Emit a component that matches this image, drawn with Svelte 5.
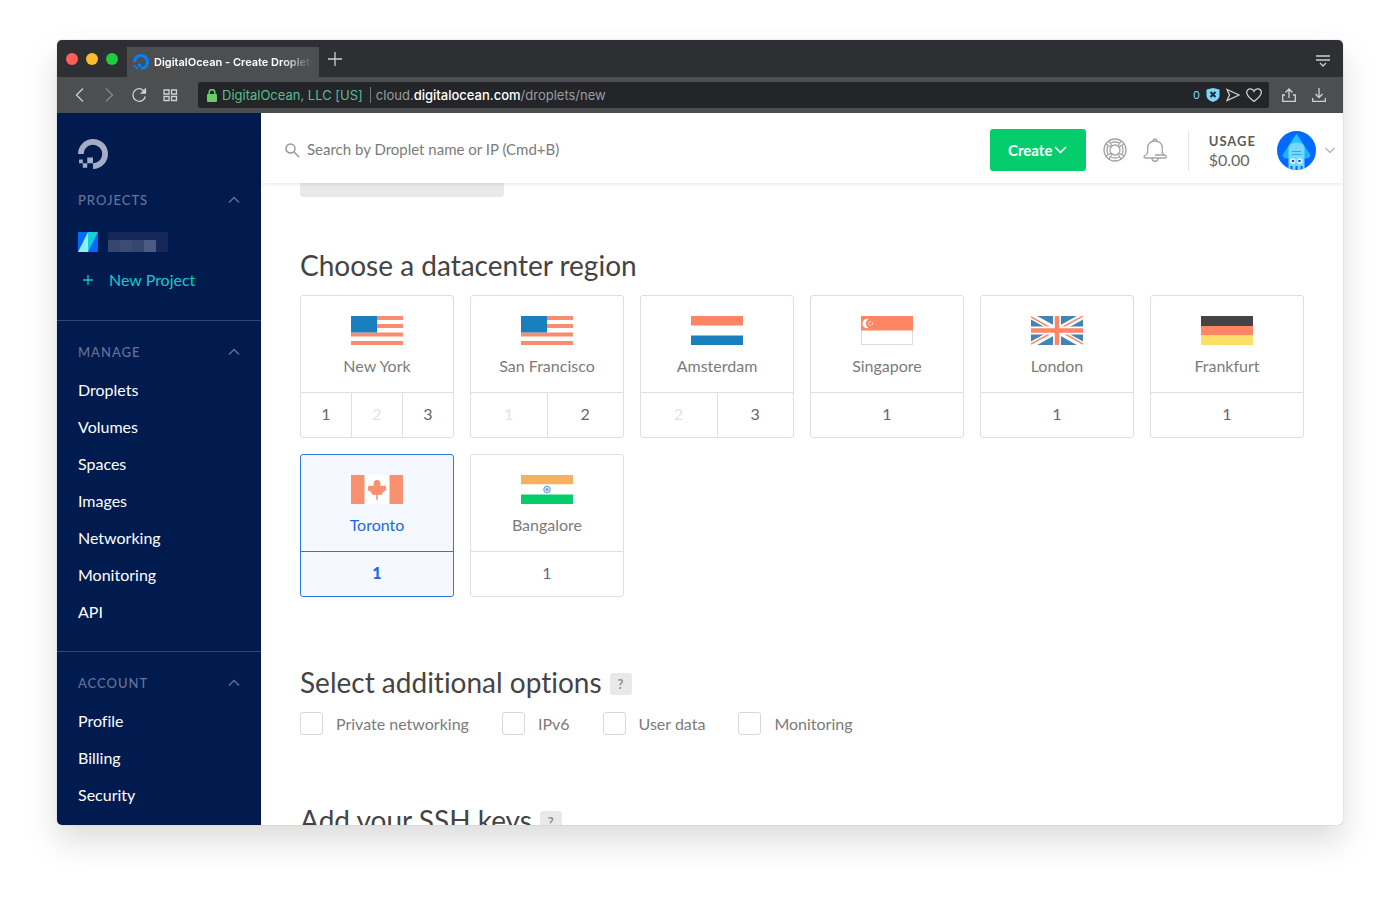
<script>
  const manageLinks = [
    "Droplets",
    "Volumes",
    "Spaces",
    "Images",
    "Networking",
    "Monitoring",
    "API",
  ];

  const accountLinks = ["Profile", "Billing", "Security"];

  const regions = [
    { name: "New York", flag: "us", slots: [1, 2, 3], full: [2] },
    { name: "San Francisco", flag: "us", slots: [1, 2], full: [1] },
    { name: "Amsterdam", flag: "nl", slots: [2, 3], full: [2] },
    { name: "Singapore", flag: "sg", slots: [1], full: [] },
    { name: "London", flag: "gb", slots: [1], full: [] },
    { name: "Frankfurt", flag: "de", slots: [1], full: [] },
    { name: "Toronto", flag: "ca", slots: [1], full: [] },
    { name: "Bangalore", flag: "in", slots: [1], full: [] },
  ];

  let options = $state([
    { id: "private-networking", label: "Private networking", checked: false },
    { id: "ipv6", label: "IPv6", checked: false },
    { id: "user-data", label: "User data", checked: false },
    { id: "monitoring", label: "Monitoring", checked: false },
  ]);

  let selected = $state({ name: "Toronto", slot: 1 });
  let search = $state("");

  function selectRegion(name, slot) {
    selected = { name, slot };
  }
</script>

{#snippet logo()}
  <svg class="logo" viewBox="0 0 24 24" aria-hidden="true">
    <path
      fill="currentColor"
      d="M12.04 0C5.408-.02.005 5.37.005 11.992h4.638c0-4.923 4.882-8.731 10.064-6.855a6.95 6.95 0 014.147 4.148c1.889 5.177-1.924 10.055-6.84 10.064v-4.61H7.391v4.623h4.61V24c7.86 0 13.967-7.588 11.397-15.83-1.115-3.59-3.985-6.446-7.575-7.575A12.8 12.8 0 0012.039 0zM7.39 19.362H3.828v3.564H7.39zm-3.563 0v-2.978H.85v2.978z"
    />
  </svg>
{/snippet}

{#snippet chevronUp()}
  <svg class="line" width="12" height="8" viewBox="0 0 12 8" aria-hidden="true">
    <path d="M1 6.5 6 1.5l5 5" />
  </svg>
{/snippet}

{#snippet flag(code)}
  <svg class="flag" width="52" height="29" viewBox="0 0 52 29" aria-hidden="true">
    {#if code === "us"}
      <path fill="#f98b6f" d="M0 0h52v4H0zM0 8h52v4H0zM0 16.500h52v4H0zM0 25h52v4H0z" />
      <path fill="#1a80bd" d="M0 0h26v16.500H0z" />
    {:else if code === "nl"}
      <path fill="#ff8664" d="M0 0h52v9.500H0z" />
      <path fill="#1a80bd" d="M0 19.500h52V29H0z" />
    {:else if code === "sg"}
      <rect x=".5" y=".5" width="51" height="28" fill="#fff" stroke="#dcdcdc" />
      <path fill="#ff8664" d="M0 0h52v14.500H0z" />
      <path fill="#fff" d="M7.500 3a4.700 4.700 0 1 0 0 9 5.200 5.200 0 0 1 0-9z" />
      <circle cx="9.500" cy="7.500" r="2" fill="none" stroke="#fff" stroke-dasharray="1.500 1" />
    {:else if code === "gb"}
      <path fill="#4384b5" d="M0 0h52v29H0z" />
      <path stroke="#fff" stroke-width="6" d="M0 0l52 29M52 0 0 29" />
      <path stroke="#ff8664" stroke-width="1.500" d="M0 1l23 13M52 0 30 12M0 28l22-12M52 28 29 15" />
      <path stroke="#fff" stroke-width="8" d="M26 0v29M0 14.500h52" />
      <path stroke="#ff8664" stroke-width="4.500" d="M26 0v29M0 14.500h52" />
    {:else if code === "de"}
      <path fill="#444" d="M0 0h52v10H0z" />
      <path fill="#ff8664" d="M0 10h52v9.500H0z" />
      <path fill="#fbdf68" d="M0 19.500h52V29H0z" />
    {:else if code === "ca"}
      <path fill="#fff" d="M13 0h26v29H13z" />
      <path fill="#f7916f" d="M0 0h13.500v29H0zM38.500 0H52v29H38.500z" />
      <path
        fill="#f7916f"
        d="M26 5c2 0 3.500 1.500 3.500 3.500L29 10.500l3 .5 2.500-.5.500 2 .500 2.500-3.500 2-1.500 3-3.700-.200v5h-1.600v-5l-3.700.200-1.500-3-3.500-2 .500-2.500.500-2 2.500.500 3-.500-.500-2C22.500 6.500 24 5 26 5z"
      />
    {:else if code === "in"}
      <path fill="#f6b160" d="M0 0h52v9.500H0z" />
      <path fill="#fff" d="M0 9.500h52v10H0z" />
      <path fill="#05cd6c" d="M0 19.500h52V29H0z" />
      <circle cx="26" cy="14.500" r="3.300" fill="#d9e8f6" stroke="#5e95cf" />
      <circle cx="26" cy="14.500" r="1.300" fill="#5e95cf" />
    {/if}
  </svg>
{/snippet}

<div class="window">
  <div class="tab-bar">
    <div class="lights">
      <span class="light close"></span>
      <span class="light minimise"></span>
      <span class="light zoom"></span>
    </div>
    <div class="tab">
      {@render logo()}
      <span class="tab-title">DigitalOcean - Create Droplets</span>
    </div>
    <button type="button" class="new-tab" aria-label="New tab">
      <svg class="line" width="14" height="14" viewBox="0 0 14 14"><path d="M7 0v14M0 7h14" /></svg>
    </button>
    <button type="button" class="tab-menu" aria-label="Tab menu">
      <svg class="line" width="14" height="12" viewBox="0 0 14 12">
        <path d="M0 1h14M0 5h14M4 8l3 3 3-3" />
      </svg>
    </button>
  </div>

  <div class="toolbar">
    <div class="tools">
      <button type="button" aria-label="Back">
        <svg class="line" width="16" height="16" viewBox="0 0 16 16"><path d="M11 1.500 4.500 8l6.500 6.500" /></svg>
      </button>
      <button type="button" class="dim" aria-label="Forward">
        <svg class="line" width="16" height="16" viewBox="0 0 16 16"><path d="M4 1.500 10.500 8 4 14.500" /></svg>
      </button>
      <button type="button" aria-label="Reload">
        <svg class="line" width="16" height="16" viewBox="0 0 16 16">
          <path d="M13 5.500A6.300 6.300 0 1 0 13.300 9.500" />
          <path fill="currentColor" d="M13.500 2v4h-4z" />
        </svg>
      </button>
      <button type="button" aria-label="Speed dial">
        <svg class="line" width="16" height="16" viewBox="0 0 16 16">
          <path d="M2 3h5v4H2zM9.500 3h5v4h-5zM2 9.500h5v4H2zM9.500 9.500h5v4h-5z" />
        </svg>
      </button>
    </div>
    <div class="address">
      <svg width="10" height="13" viewBox="0 0 10 13" aria-hidden="true">
        <path fill="none" stroke="#6ccb6c" stroke-width="1.500" d="M2.200 6V3.500a2.800 2.800 0 0 1 5.600 0V6" />
        <rect y="5" width="10" height="8" rx="1" fill="#6ccb6c" />
      </svg>
      <span class="owner">DigitalOcean, LLC [US]</span>
      <span class="url">cloud.<b>digitalocean.com</b>/droplets/new</span>
      <div class="address-tools">
        <span class="blocked">0</span>
        <svg width="14" height="14" viewBox="0 0 14 14" aria-hidden="true">
          <path fill="#7fd6fa" d="M7 0l6.500 1.500v6C13.500 11 10 13 7 14 4 13 .5 11 .5 7.500v-6z" />
          <path stroke="#1d2a33" stroke-width="2" d="M4.500 4l5 5M9.500 4l-5 5" />
        </svg>
        <svg class="line" width="14" height="14" viewBox="0 0 14 14" aria-hidden="true">
          <path d="M1 1.500 13 7 1 12.500 3.500 7z" />
        </svg>
        <svg class="line" width="16" height="14" viewBox="0 0 16 14" aria-hidden="true">
          <path d="M8 13.500C4 10.500.7 8 .7 4.600.7 2.400 2.300.8 4.300.8 5.900.8 7.300 1.700 8 3.300 8.700 1.700 10.100.8 11.700.8c2 0 3.600 1.600 3.600 3.800C15.300 8 12 10.500 8 13.500z" />
        </svg>
      </div>
    </div>
    <button type="button" aria-label="Share">
      <svg class="line" width="14" height="14" viewBox="0 0 14 14">
        <path d="M7 10V1M3.500 4.500 7 1l3.500 3.500M3 7H.7v6.300h12.600V7H11" />
      </svg>
    </button>
    <button type="button" aria-label="Downloads">
      <svg class="line" width="14" height="14" viewBox="0 0 14 14">
        <path d="M7 0v9.500M3.500 6 7 9.500 10.500 6M.7 10v3.300h12.600V10" />
      </svg>
    </button>
  </div>

  <div class="app">
    <aside class="sidebar">
      <a class="home" href="/" aria-label="DigitalOcean">{@render logo()}</a>

      <section class="nav-section projects">
        <h2>Projects {@render chevronUp()}</h2>
        <a class="project" href="/projects" aria-label="Project">
          <svg width="20" height="20" viewBox="0 0 20 20">
            <rect width="20" height="20" rx="1" fill="#0069ff" />
            <path fill="#8df0f8" d="M10 0v20H0z" />
            <path fill="#13cfd8" d="M10 0h10L10 20z" />
          </svg>
          <svg width="60" height="20" viewBox="0 0 60 20">
            <path fill="#142756" d="M0 0h60v20H0z" />
            <path fill="#35466f" d="M0 8h48v12H0z" />
            <path fill="#3c4b75" d="M12 8h12v12H12z" />
            <path fill="#4a5a83" d="M36 8h12v12H36z" />
          </svg>
        </a>
        <a class="new-project" href="/projects/new">
          <svg class="line" width="10" height="10" viewBox="0 0 10 10"><path d="M5 0v10M0 5h10" /></svg>
          New Project
        </a>
      </section>

      <nav class="nav-section" aria-label="Manage">
        <h2>Manage {@render chevronUp()}</h2>
        <ul>
          {#each manageLinks as link}
            <li><a href="/{link.toLowerCase()}">{link}</a></li>
          {/each}
        </ul>
      </nav>

      <nav class="nav-section" aria-label="Account">
        <h2>Account {@render chevronUp()}</h2>
        <ul>
          {#each accountLinks as link}
            <li><a href="/account/{link.toLowerCase()}">{link}</a></li>
          {/each}
        </ul>
      </nav>
    </aside>

    <div class="page">
      <header class="top-bar">
        <label class="search">
          <svg width="15" height="15" viewBox="0 0 15 15" aria-hidden="true">
            <g fill="none" stroke="#999" stroke-width="1.500">
              <circle cx="5.500" cy="5.500" r="4.500" />
              <path d="M9 9l5 5" />
            </g>
          </svg>
          <input
            type="text"
            aria-label="Search"
            placeholder="Search by Droplet name or IP (Cmd+B)"
            bind:value={search}
          />
        </label>
        <button type="button" class="create">
          Create
          <svg width="13" height="8" viewBox="0 0 13 8" aria-hidden="true">
            <path fill="none" stroke="#fff" stroke-width="1.500" d="M1 1l5.500 5.500L12 1" />
          </svg>
        </button>
        <button type="button" class="icon-button" aria-label="Help">
          <svg class="line" width="24" height="24" viewBox="0 0 24 24">
            <circle cx="12" cy="12" r="11" />
            <circle cx="12" cy="12" r="5" />
            <path d="M3 6 8 9M6 3l3 5M21 6l-5 3M18 3l-3 5M3 18l5-3M6 21l3-5M21 18l-5-3M18 21l-3-5" />
            <path d="M7.500 5q4.500-2 9 0M7.500 19q4.500 2 9 0M5 7.500q-2 4.500 0 9M19 7.500q2 4.500 0 9" />
          </svg>
        </button>
        <button type="button" class="icon-button" aria-label="Notifications">
          <svg class="line" width="24" height="24" viewBox="0 0 24 24">
            <path d="M22 20H2.500c-1.200 0-1.800-1.200-1.200-2 .5-.7 3.400-.7 3.400-4V9.500C4.700 5.500 8 3 12 3s7.300 2.500 7.300 6.500V14c0 2 1 2.800 3 3.300 1.500.6 1.200 2.700-.3 2.700M10 3c-.3-2.800 4.300-2.800 4 0M9 20c0 4.300 6 4.300 6 0M12 17h10" />
          </svg>
        </button>
        <div class="usage">
          <strong>Usage</strong>
          <span>$0.00</span>
        </div>
        <button type="button" class="profile" aria-label="Profile menu">
          <svg width="39" height="39" viewBox="0 0 39 39">
            <defs>
              <clipPath id="avatar"><circle cx="19.500" cy="19.500" r="19.500" /></clipPath>
            </defs>
            <g clip-path="url(#avatar)">
              <path fill="#0069ff" d="M0 0h39v39H0z" />
              <path fill="#1fb1fb" d="M19.500 3 12 14l-6.500 10c0 3 3 3.500 6 3.500h16c3 0 6-.5 6-3.500L27 14z" />
              <path fill="#27c3fc" d="M19.500 3 12 15h15z" />
              <path fill="#78d8fc" d="M11.500 17c0-7 16-7 16 0v22h-16z" />
              <path stroke="#27aef0" d="M15 20.500h9M14.500 23.500h10" />
              <circle cx="15.700" cy="30" r="2.700" fill="#eaf9ff" />
              <circle cx="22.700" cy="30" r="2.700" fill="#eaf9ff" />
              <circle cx="16" cy="30" r="1.300" fill="#0057d8" />
              <circle cx="22.500" cy="30" r="1.300" fill="#0057d8" />
              <path stroke="#0069ff" stroke-width="2" d="M14.500 35v4M19.500 35v4M24.500 35v4" />
            </g>
          </svg>
          <svg class="line" width="10" height="7" viewBox="0 0 10 7"><path d="M.5 1 5 5.500 9.500 1" /></svg>
        </button>
      </header>

      <main>
        <div class="scrolled-block"></div>

        <section>
          <h1>Choose a datacenter region</h1>
          <div class="regions">
            {#each regions as region}
              <div class="region" class:selected={selected.name === region.name}>
                <div class="place">
                  {@render flag(region.flag)}
                  <span>{region.name}</span>
                </div>
                <div class="slots">
                  {#each region.slots as slot}
                    <button
                      type="button"
                      aria-label="{region.name} {slot}"
                      disabled={region.full.includes(slot)}
                      onclick={() => selectRegion(region.name, slot)}
                    >
                      {slot}
                    </button>
                  {/each}
                </div>
              </div>
            {/each}
          </div>
        </section>

        <section>
          <h1>
            Select additional options
            <button type="button" class="hint" aria-label="About options">?</button>
          </h1>
          <div class="options">
            {#each options as option}
              <label for={option.id}>
                <input type="checkbox" id={option.id} bind:checked={option.checked} />
                {option.label}
              </label>
            {/each}
          </div>
        </section>

        <section>
          <h1>
            Add your SSH keys
            <button type="button" class="hint" aria-label="About SSH keys">?</button>
          </h1>
        </section>
      </main>
    </div>
  </div>
</div>

<style>
  :global(body) {
    margin: 0;
    background: #ffffff;
    color: #676767;
    font-family: Lato, "Liberation Sans", sans-serif;
    font-size: 16px;
    font-variant-ligatures: none;
    line-height: 20px;
  }

  :global(*) {
    box-sizing: border-box;
  }

  button {
    padding: 0;
    border: 0;
    background: transparent;
    color: inherit;
    font: inherit;
    cursor: pointer;
  }

  svg {
    display: block;
    flex: none;
  }

  .line {
    fill: none;
    stroke: currentColor;
    stroke-width: 1.3px;
  }

  .window {
    display: flex;
    flex-direction: column;
    height: calc(100vh - 115px);
    margin: 40px 57px 75px;
    overflow: hidden;
    border-radius: 5px;
    background: #ffffff;
    box-shadow:
      0 0 1px rgba(0, 0, 0, 0.4),
      0 16px 32px rgba(0, 0, 0, 0.14);
  }

  .tab-bar,
  .toolbar {
    display: flex;
    align-items: center;
    flex: none;
    color: #d0d0d0;
    font-family: Inter, "Liberation Sans", sans-serif;
  }

  .tab-bar {
    height: 37px;
    padding-right: 13px;
    background: #2e2f32;
  }

  .lights {
    display: flex;
    gap: 8px;
    padding: 0 9px;
  }

  .light {
    width: 12px;
    height: 12px;
    border-radius: 50%;
  }

  .close {
    background: #ff5f57;
  }

  .minimise {
    background: #ffbd2e;
  }

  .zoom {
    background: #1fcb3f;
  }

  .tab {
    display: flex;
    align-items: center;
    gap: 5px;
    align-self: flex-end;
    width: 192px;
    height: 30px;
    padding: 0 6px;
    background: #4d4e50;
    color: #ffffff;
    font-size: 11px;
    font-weight: 600;
  }

  .tab .logo {
    width: 16px;
    height: 16px;
    color: #0080ff;
  }

  .tab-title {
    overflow: hidden;
    white-space: nowrap;
    mask-image: linear-gradient(to right, #000 80%, transparent);
  }

  .new-tab {
    margin-left: 9px;
  }

  .tab-menu {
    margin: 5px 0 0 auto;
  }

  .toolbar {
    gap: 16px;
    height: 36px;
    padding: 0 17px 0 15px;
    background: #4d4e50;
  }

  .tools {
    display: flex;
    gap: 14px;
  }

  .dim {
    color: #87888a;
  }

  .address {
    display: flex;
    align-items: center;
    flex: 1;
    gap: 5px;
    min-width: 0;
    height: 26px;
    margin: 0 -3px 0 4px;
    padding: 0 7px 0 9px;
    border-radius: 2px;
    background: #242528;
    font-size: 13px;
    white-space: nowrap;
  }

  .owner {
    padding-right: 7px;
    border-right: 1px solid #77787a;
    color: #57be8d;
    line-height: 16px;
  }

  .url {
    color: #9c9d9f;
  }

  .url b {
    color: #ffffff;
    font-weight: 500;
  }

  .address-tools {
    display: flex;
    align-items: center;
    gap: 6px;
    margin-left: auto;
  }

  .blocked {
    color: #7fd6fa;
    font-size: 11px;
  }

  .app {
    display: flex;
    flex: 1;
    min-height: 0;
  }

  .sidebar {
    flex: none;
    width: 204px;
    overflow: hidden;
    background: #011b4e;
    color: #ffffff;
  }

  .home {
    display: block;
    width: 30px;
    margin: 26px 21px 0;
    color: #a5adc6;
  }

  .home .logo {
    width: 30px;
    height: 30px;
  }

  .nav-section {
    padding: 23px 21px 21px;
  }

  .nav-section + .nav-section {
    border-top: 1px solid #344771;
  }

  .nav-section h2 {
    display: flex;
    align-items: center;
    justify-content: space-between;
    margin: 0;
    color: #65739a;
    font-size: 13px;
    font-weight: 500;
    letter-spacing: 1px;
    line-height: 16px;
    text-transform: uppercase;
  }

  .nav-section a {
    color: inherit;
    text-decoration: none;
  }

  .nav-section ul {
    margin: 11px 0 0;
    padding: 0;
    list-style: none;
  }

  .nav-section li {
    line-height: 37px;
  }

  .nav-section.projects {
    padding-bottom: 30px;
  }

  .project {
    display: flex;
    gap: 10px;
    margin-top: 24px;
  }

  .projects .new-project {
    display: flex;
    align-items: center;
    gap: 16px;
    margin-top: 18px;
    padding-left: 5px;
    color: #14c9cd;
  }

  .page {
    display: flex;
    flex-direction: column;
    flex: 1;
    min-width: 0;
  }

  .top-bar {
    z-index: 1;
    display: flex;
    align-items: center;
    flex: none;
    height: 70px;
    padding: 0 8px 0 24px;
    box-shadow: 0 1px 4px rgba(0, 0, 0, 0.1);
  }

  .search {
    display: flex;
    align-items: center;
    flex: 1;
    gap: 7px;
    margin-top: 4px;
  }

  .search input {
    flex: 1;
    min-width: 0;
    padding: 0 0 3px;
    border: 0;
    outline: 0;
    color: #676767;
    font: inherit;
    font-size: 15px;
  }

  .search input::placeholder {
    color: #7b7b7b;
    opacity: 1;
  }

  .create {
    display: flex;
    align-items: center;
    justify-content: center;
    gap: 2px;
    width: 96px;
    height: 42px;
    margin: 3px 17px 0 0;
    border-radius: 3px;
    background: #05cd6c;
    color: #ffffff;
    font-size: 15px;
    font-weight: 700;
  }

  .icon-button {
    margin: 3px 16px 0 0;
    color: #a3a3a3;
  }

  .usage {
    display: flex;
    flex-direction: column;
    justify-content: center;
    height: 40px;
    margin: 5px 21px 0 5px;
    padding-left: 20px;
    border-left: 1px solid #e5e5e5;
  }

  .usage strong {
    color: #5b5b5b;
    font-size: 13px;
    letter-spacing: 1px;
    line-height: 18px;
    text-transform: uppercase;
  }

  .profile {
    display: flex;
    align-items: center;
    gap: 9px;
    margin-top: 4px;
    color: #b5b5b5;
  }

  main {
    flex: 1;
    min-height: 0;
    padding: 0 39px;
    overflow: hidden;
  }

  .scrolled-block {
    width: 204px;
    height: 14px;
    margin-bottom: 52px;
    border-radius: 0 0 3px 3px;
    background: #e9e9e9;
  }

  section h1 {
    display: flex;
    align-items: center;
    gap: 8px;
    margin: 0 0 14px;
    color: #444444;
    font-size: 28px;
    font-weight: 400;
    line-height: 32px;
  }

  .regions {
    display: grid;
    grid-template-columns: repeat(6, minmax(0, 1fr));
    gap: 16px;
    margin-bottom: 69px;
  }

  .region {
    overflow: hidden;
    border: 1px solid #dfdfdf;
    border-radius: 3px;
    text-align: center;
  }

  .place {
    display: flex;
    flex-direction: column;
    align-items: center;
    gap: 11px;
    padding: 20px 0 16px;
    color: #7b7b7b;
  }

  .slots {
    display: flex;
    border-top: 1px solid #dfdfdf;
  }

  .slots button {
    flex: 1;
    height: 44px;
    padding-bottom: 2px;
  }

  .slots button + button {
    border-left: 1px solid #dfdfdf;
  }

  .slots button:disabled {
    color: #e3e3e3;
    cursor: default;
  }

  .region.selected,
  .region.selected .slots {
    border-color: #2b78e4;
  }

  .region.selected {
    background: #f5f9ff;
  }

  .region.selected .place,
  .region.selected .slots {
    color: #1a69e0;
  }

  .region.selected .slots {
    font-weight: 900;
  }

  .hint {
    width: 22px;
    height: 22px;
    margin-top: 4px;
    border-radius: 3px;
    background: #e9e9e9;
    color: #8f8f8f;
    font-size: 13px;
    font-weight: 700;
    line-height: 22px;
  }

  .options {
    display: flex;
    gap: 33px;
    margin-bottom: 69px;
    color: #7b7b7b;
  }

  .options label {
    display: flex;
    align-items: center;
    gap: 13px;
  }

  .options input {
    appearance: none;
    width: 23px;
    height: 23px;
    margin: 0;
    border: 1px solid #d8d8d8;
    border-radius: 3px;
    background: #ffffff;
  }

  .options input:checked {
    border-color: #2b78e4;
    background: #2b78e4;
  }
</style>
